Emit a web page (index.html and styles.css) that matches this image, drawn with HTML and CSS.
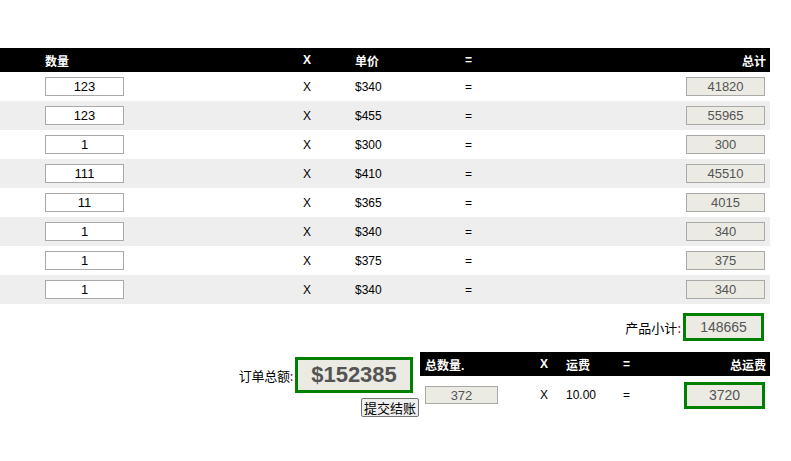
FILE: index.html
```html
<!DOCTYPE html>
<html>
<head>
<meta charset="utf-8">
<link rel="stylesheet" href="styles.css">
</head>
<body>
<div class="page">
  <div class="items">
    <div class="row head">
      <span class="c-qty">数量</span>
      <span class="c-x">X</span>
      <span class="c-price">单价</span>
      <span class="c-eq">=</span>
      <span class="c-total">总计</span>
    </div>
    <div class="row"><span class="c-qty"><input class="qty" value="123"></span><span class="c-x">X</span><span class="c-price">$340</span><span class="c-eq">=</span><span class="c-total"><input class="tot" value="41820" disabled></span></div>
    <div class="row alt"><span class="c-qty"><input class="qty" value="123"></span><span class="c-x">X</span><span class="c-price">$455</span><span class="c-eq">=</span><span class="c-total"><input class="tot" value="55965" disabled></span></div>
    <div class="row"><span class="c-qty"><input class="qty" value="1"></span><span class="c-x">X</span><span class="c-price">$300</span><span class="c-eq">=</span><span class="c-total"><input class="tot" value="300" disabled></span></div>
    <div class="row alt"><span class="c-qty"><input class="qty" value="111"></span><span class="c-x">X</span><span class="c-price">$410</span><span class="c-eq">=</span><span class="c-total"><input class="tot" value="45510" disabled></span></div>
    <div class="row"><span class="c-qty"><input class="qty" value="11"></span><span class="c-x">X</span><span class="c-price">$365</span><span class="c-eq">=</span><span class="c-total"><input class="tot" value="4015" disabled></span></div>
    <div class="row alt"><span class="c-qty"><input class="qty" value="1"></span><span class="c-x">X</span><span class="c-price">$340</span><span class="c-eq">=</span><span class="c-total"><input class="tot" value="340" disabled></span></div>
    <div class="row"><span class="c-qty"><input class="qty" value="1"></span><span class="c-x">X</span><span class="c-price">$375</span><span class="c-eq">=</span><span class="c-total"><input class="tot" value="375" disabled></span></div>
    <div class="row alt"><span class="c-qty"><input class="qty" value="1"></span><span class="c-x">X</span><span class="c-price">$340</span><span class="c-eq">=</span><span class="c-total"><input class="tot" value="340" disabled></span></div>
  </div>

  <div class="subtotal">
    <span class="label">产品小计<span class="colon">:</span></span>
    <input class="green sub" value="148665" disabled>
  </div>

  <div class="bottom">
    <div class="order">
      <div class="order-line">
        <span class="label">订单总额<span class="colon">:</span></span>
        <input class="green big" value="$152385" disabled>
      </div>
      <button class="submit">提交结账</button>
    </div>
    <div class="ship">
      <div class="srow head">
        <span class="s-qty">总数量.</span>
        <span class="s-x">X</span>
        <span class="s-fee">运费</span>
        <span class="s-eq">=</span>
        <span class="s-total">总运费</span>
      </div>
      <div class="srow body">
        <span class="s-qty"><input class="tot small" value="372" disabled></span>
        <span class="s-x">X</span>
        <span class="s-fee">10.00</span>
        <span class="s-eq">=</span>
        <span class="s-total"><input class="green ship-tot" value="3720" disabled></span>
      </div>
    </div>
  </div>
</div>
</body>
</html>
```

FILE: styles.css
```css
* { box-sizing: border-box; }
body {
  margin: 0;
  font-family: "Liberation Sans", Arial, "Noto Sans CJK SC", sans-serif;
  font-size: 12px;
  color: #000;
  background: #fff;
}
.page { width: 770px; padding-top: 48px; }

.row {
  display: grid;
  grid-template-columns: 45px 258px 52px 110px 1fr auto;
  align-items: center;
  height: 29px;
  padding-right: 5px;
}
.row > span:first-child { grid-column: 2; }
.row.head {
  height: 24px;
  background: #000;
  color: #fff;
  font-weight: bold;
  font-size: 12px;
  padding-right: 4px;
}
.row.alt { background: #eeeeee; }
.c-total { text-align: right; }

input {
  font-family: "Liberation Sans", Arial, sans-serif;
  font-size: 13px;
  text-align: center;
  margin: 0;
  padding: 0;
  outline: none;
}
.qty {
  width: 79px;
  height: 19px;
  border: 1px solid #a9a9a9;
  background: #fff;
  color: #000;
  display: block;
}
.tot {
  width: 79px;
  height: 19px;
  border: 1px solid #a9a9a9;
  background: #ebebe4;
  color: #545454;
  display: block;
}
.green {
  border: 3px solid #008000;
  background: #ebebe4;
  color: #545454;
  display: block;
}

.subtotal {
  display: flex;
  justify-content: flex-end;
  align-items: center;
  height: 48px;
  padding: 9px 6px 11px 0;
  font-size: 13px;
}
.label { font-family: "Noto Sans CJK SC", sans-serif; font-size: 13px; margin-right: 2px; }
.colon { color: #990033; }
.sub { width: 81px; height: 28px; font-size: 14px; }

.bottom { display: flex; align-items: flex-start; }
.order {
  width: 420px;
  display: flex;
  flex-direction: column;
  align-items: flex-end;
  padding-top: 5px;
}
.order-line { display: flex; align-items: center; margin-right: 7px; }
.order-line .label { letter-spacing: -0.3px; }
.big {
  width: 118px;
  height: 36px;
  font-size: 22px;
  font-weight: bold;
}
.submit {
  margin: 5px 1px 0 0;
  height: 19px;
  padding: 0 2px;
  font-family: "Noto Sans CJK SC", sans-serif;
  font-size: 13px;
  line-height: 15px;
  border: 1px solid #767676;
  border-radius: 2px;
  background: #efefef;
  color: #000;
}

.ship { width: 350px; }
.srow {
  display: grid;
  grid-template-columns: 115px 26px 57px 1fr auto;
  align-items: center;
  padding-left: 5px;
  padding-right: 5px;
}
.srow.head {
  height: 24px;
  background: #000;
  color: #fff;
  font-weight: bold;
  padding-right: 4px;
}
.srow.body { height: 28px; margin-top: 5px; }
.s-total { text-align: right; }
.small { width: 73px; height: 18px; }
.ship-tot { width: 81px; height: 27px; font-size: 14px; }
```
